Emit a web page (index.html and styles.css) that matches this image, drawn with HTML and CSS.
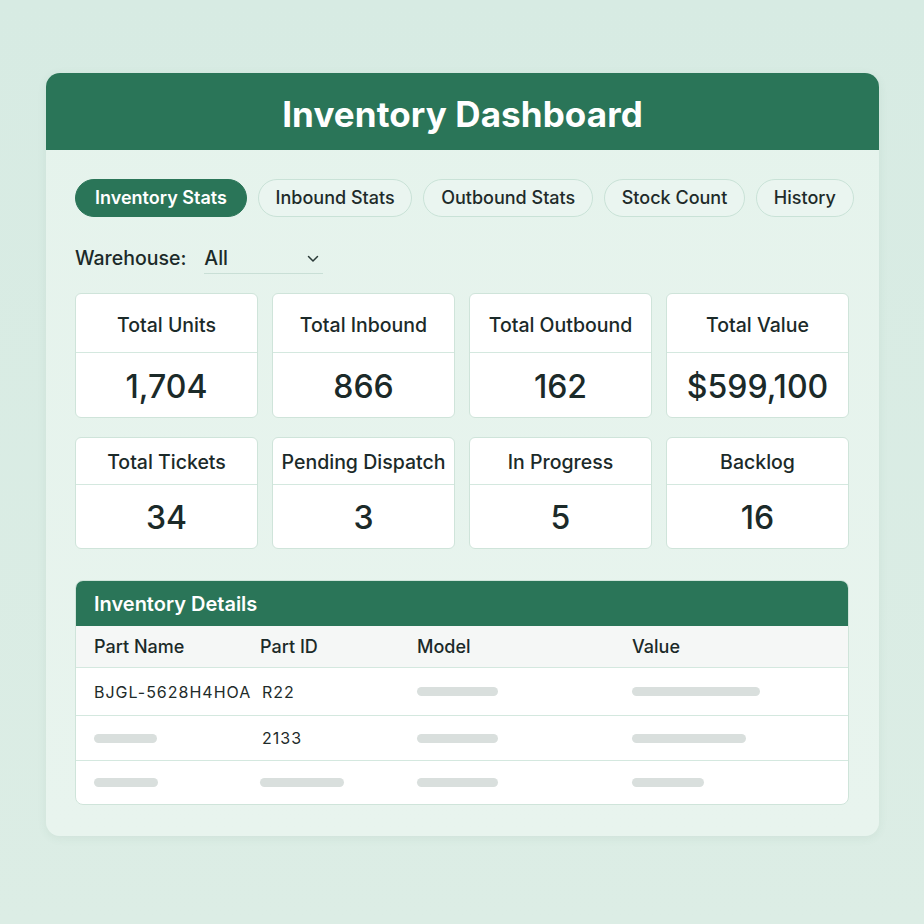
FILE: index.html
```html
<!DOCTYPE html>
<html>
<head>
<meta charset="utf-8">
<link rel="stylesheet" href="styles.css">
</head>
<body>
<div class="card">
  <div class="title-bar"><h1>Inventory Dashboard</h1></div>
  <div class="content">
    <div class="tabs">
      <span class="tab active">Inventory Stats</span>
      <span class="tab">Inbound Stats</span>
      <span class="tab">Outbound Stats</span>
      <span class="tab">Stock Count</span>
      <span class="tab">History</span>
    </div>
    <div class="filter">
      <span class="filter-label">Warehouse:</span>
      <span class="select">All
        <svg class="chev" width="12" height="8" viewBox="0 0 12 8"><path d="M1.5 1.5 L6 6 L10.5 1.5" fill="none" stroke="#2a3a38" stroke-width="1.5" stroke-linecap="round" stroke-linejoin="round"/></svg>
      </span>
    </div>
    <div class="stats">
      <div class="stat tall"><div class="stat-label">Total Units</div><div class="stat-value">1,704</div></div>
      <div class="stat tall"><div class="stat-label">Total Inbound</div><div class="stat-value">866</div></div>
      <div class="stat tall"><div class="stat-label">Total Outbound</div><div class="stat-value">162</div></div>
      <div class="stat tall"><div class="stat-label">Total Value</div><div class="stat-value">$599,100</div></div>
      <div class="stat short"><div class="stat-label">Total Tickets</div><div class="stat-value">34</div></div>
      <div class="stat short"><div class="stat-label">Pending Dispatch</div><div class="stat-value">3</div></div>
      <div class="stat short"><div class="stat-label">In Progress</div><div class="stat-value">5</div></div>
      <div class="stat short"><div class="stat-label">Backlog</div><div class="stat-value">16</div></div>
    </div>
    <div class="details">
      <div class="details-head">Inventory Details</div>
      <div class="row thead">
        <span>Part Name</span><span>Part ID</span><span>Model</span><span>Value</span>
      </div>
      <div class="row r1">
        <span class="txt">BJGL-5628H4HOA</span><span class="txt">R22</span>
        <span><i class="bar" style="width:81px"></i></span>
        <span><i class="bar" style="width:128px"></i></span>
      </div>
      <div class="row r2">
        <span><i class="bar" style="width:63px"></i></span><span class="txt">2133</span>
        <span><i class="bar" style="width:81px"></i></span>
        <span><i class="bar" style="width:114px"></i></span>
      </div>
      <div class="row r3">
        <span><i class="bar" style="width:64px"></i></span>
        <span><i class="bar" style="width:84px"></i></span>
        <span><i class="bar" style="width:81px"></i></span>
        <span><i class="bar" style="width:72px"></i></span>
      </div>
    </div>
  </div>
</div>
</body>
</html>
```
FILE: styles.css
```css
* { box-sizing: border-box; }
html, body { margin: 0; }
body {
  width: 924px;
  height: 924px;
  background: linear-gradient(180deg, #d7ebe3 0%, #dcede5 100%);
  font-family: Inter, "Noto Sans", sans-serif;
  color: #1b2a29;
  padding-top: 73px;
  padding-left: 46px;
}
.card {
  width: 833px;
  height: 763px;
  background: linear-gradient(180deg, #e5f3ec 0%, #e8f4ee 100%);
  border-radius: 14px;
  overflow: hidden;
  box-shadow: 0 2px 10px rgba(60, 110, 90, 0.08);
}
.title-bar {
  height: 77px;
  background: #2a7558;
  display: flex;
  align-items: center;
  justify-content: center;
}
.title-bar h1 {
  margin: 0;
  color: #fff;
  font-size: 35px;
  font-weight: 700;
  letter-spacing: 0.1px;
  padding-top: 5px;
}
.content {
  padding: 29px 26px 0 29px;
}
.tabs {
  display: flex;
  gap: 11px;
}
.tab {
  height: 38px;
  line-height: 36px;
  padding: 0 16.75px;
  border: 1px solid #c9e2d7;
  border-radius: 19px;
  background: #eaf5f0;
  font-size: 18px;
  font-weight: 500;
  color: #1e2b2a;
  white-space: nowrap;
}
.tab.active {
  background: #2a7558;
  border-color: #2a7558;
  color: #fff;
  font-weight: 600;
  padding: 0 19px;
}
.filter {
  display: flex;
  align-items: center;
  margin-top: 25px;
  height: 32px;
}
.filter-label {
  font-size: 19.5px;
  font-weight: 500;
  margin-right: 18px;
}
.select {
  position: relative;
  width: 119px;
  height: 32px;
  line-height: 30px;
  border-bottom: 1px solid #c9dfd6;
  font-size: 19.5px;
  font-weight: 500;
  display: flex;
  align-items: center;
  justify-content: space-between;
  padding-right: 4px;
}
.chev { margin-top: 2px; }
.stats {
  margin-top: 19px;
  width: 774px;
  display: grid;
  grid-template-columns: repeat(4, 1fr);
  column-gap: 14px;
  row-gap: 19px;
}
.stat {
  background: #fff;
  border: 1px solid #cfe4da;
  border-radius: 6px;
  display: flex;
  flex-direction: column;
}
.stat.tall { height: 125px; }
.stat.short { height: 112px; }
.stat-label {
  border-bottom: 1px solid #d4e8df;
  display: flex;
  align-items: center;
  justify-content: center;
  font-size: 19.5px;
  font-weight: 500;
  white-space: nowrap;
}
.tall .stat-label { height: 59px; padding-top: 3px; }
.short .stat-label { height: 47px; padding-top: 1px; }
.stat-value {
  flex: 1;
  display: flex;
  align-items: center;
  justify-content: center;
  font-size: 32px;
  font-weight: 500;
  padding-top: 2px;
}
.details {
  margin-top: 31px;
  width: 774px;
  background: #fff;
  border: 1px solid #cfe4da;
  border-radius: 8px;
  overflow: hidden;
}
.details-head {
  height: 45px;
  background: #2a7558;
  color: #fff;
  font-size: 20px;
  font-weight: 600;
  display: flex;
  align-items: center;
  padding-left: 18px;
}
.row {
  display: grid;
  grid-template-columns: 166px 157px 215px 1fr;
  align-items: center;
  padding-left: 18px;
  border-bottom: 1px solid #d4e8df;
}
.row:last-child { border-bottom: none; }
.thead {
  height: 42px;
  background: #f5f7f6;
  font-size: 18px;
  font-weight: 500;
}
.r1 { height: 48px; }
.r2 { height: 45px; }
.r3 { height: 43px; }
.txt {
  font-size: 16px;
  letter-spacing: 1px;
  color: #1e2b2a;
}
.r1 .txt:nth-child(2), .r2 .txt { padding-left: 2px; }
.bar {
  display: block;
  height: 9px;
  border-radius: 5px;
  background: #d9dfdd;
}
```
